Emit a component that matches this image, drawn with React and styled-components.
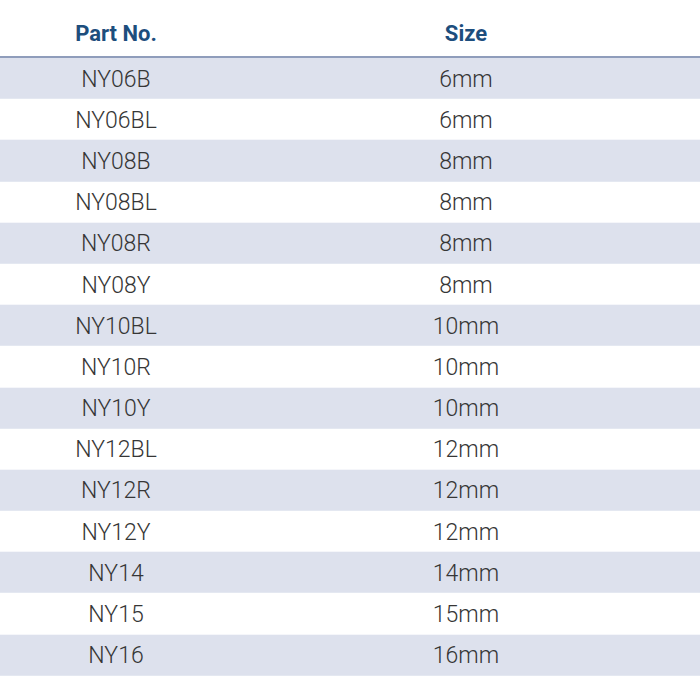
import React from "react";
import styled, { createGlobalStyle } from "styled-components";

const Global = createGlobalStyle`
  html, body { margin: 0; padding: 0; background: #ffffff; }
  body { font-family: Roboto, "Noto Sans", sans-serif; }
`;

const Table = styled.div`
  width: 700px;
  display: flex;
  flex-direction: column;
`;

const HeaderRow = styled.div`
  display: grid;
  grid-template-columns: 232px 1fr;
  height: 58px;
  align-items: center;
  border-bottom: 2px solid #8f9dbb;
  box-sizing: border-box;
  padding-top: 10px;
`;

const HeadCell = styled.div`
  text-align: center;
  font-family: Roboto, "Noto Sans", sans-serif;
  font-weight: 700;
  font-size: 22px;
  color: #1d4e7d;
`;

const Row = styled.div`
  display: grid;
  grid-template-columns: 232px 1fr;
  height: 41.2px;
  align-items: center;
  background: ${(p) => (p.$shaded ? "#dde1ed" : "#ffffff")};
  border-bottom: 1px solid ${(p) => (p.$shaded ? "#e4e8f1" : "#f5f6fa")};
  box-sizing: border-box;
  padding-top: 2px;
`;

const Cell = styled.div`
  text-align: center;
  font-family: Roboto, "Noto Sans", sans-serif;
  font-weight: 300;
  font-size: 23px;
  color: #363636;
`;

const rows = [
  ["NY06B", "6mm"],
  ["NY06BL", "6mm"],
  ["NY08B", "8mm"],
  ["NY08BL", "8mm"],
  ["NY08R", "8mm"],
  ["NY08Y", "8mm"],
  ["NY10BL", "10mm"],
  ["NY10R", "10mm"],
  ["NY10Y", "10mm"],
  ["NY12BL", "12mm"],
  ["NY12R", "12mm"],
  ["NY12Y", "12mm"],
  ["NY14", "14mm"],
  ["NY15", "15mm"],
  ["NY16", "16mm"],
];

export default function App() {
  return (
    <>
      <Global />
      <Table>
        <HeaderRow>
          <HeadCell>Part No.</HeadCell>
          <HeadCell>Size</HeadCell>
        </HeaderRow>
        {rows.map(([part, size], i) => (
          <Row key={part} $shaded={i % 2 === 0}>
            <Cell>{part}</Cell>
            <Cell>{size}</Cell>
          </Row>
        ))}
      </Table>
    </>
  );
}
